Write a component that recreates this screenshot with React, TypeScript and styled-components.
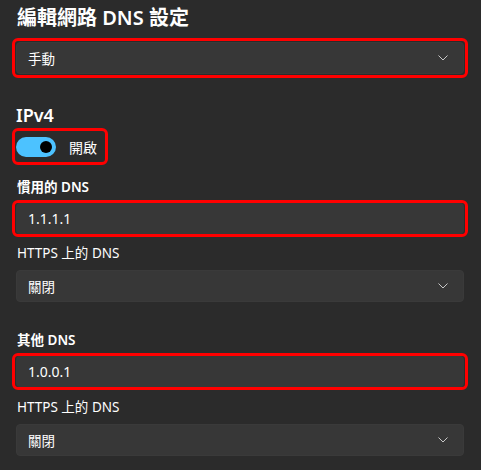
import React from "react";
import styled, { createGlobalStyle } from "styled-components";

const Global = createGlobalStyle`
  html, body { margin: 0; padding: 0; background: #2b2b2b; }
  body {
    font-family: "Noto Sans", "Noto Sans CJK TC", sans-serif;
    color: #ffffff;
  }
`;

const Page = styled.div`
  width: 481px;
  height: 470px;
  box-sizing: border-box;
  padding: 4px 17px 0 16px;
  display: flex;
  flex-direction: column;
  align-items: stretch;
  overflow: hidden;
`;

const Title = styled.h1`
  margin: 0;
  font-size: 20px;
  line-height: 28px;
  font-weight: 600;
  padding-left: 1px;
`;

const Heading = styled.h2`
  margin: 25px 0 0;
  font-size: 18px;
  line-height: 24px;
  font-weight: 600;
`;

const Label = styled.div<{ $bold?: boolean; $mt: number }>`
  margin-top: ${(p) => p.$mt}px;
  font-size: 13.5px;
  line-height: 20px;
  font-weight: ${(p) => (p.$bold ? 600 : 400)};
  padding-left: 1px;
`;

const Highlight = styled.div<{ $mt: number; $pad: number; $inline?: boolean }>`
  margin-top: ${(p) => p.$mt}px;
  margin-left: -4px;
  margin-right: -4px;
  border: 3px solid #ff0000;
  border-radius: 6px;
  padding: ${(p) => p.$pad}px 1px;
  display: ${(p) => (p.$inline ? "inline-flex" : "block")};
  align-self: ${(p) => (p.$inline ? "flex-start" : "stretch")};
`;

const Select = styled.div<{ $mt?: number }>`
  margin-top: ${(p) => p.$mt ?? 0}px;
  height: 32px;
  box-sizing: border-box;
  background: #373737;
  border: 1px solid #3a3a3a;
  border-radius: 4px;
  display: flex;
  align-items: center;
  justify-content: space-between;
  padding: 0 15px 0 11px;
  font-size: 13.5px;
`;

const TextField = styled.div`
  height: 31px;
  box-sizing: border-box;
  background: #373737;
  border-radius: 4px;
  display: flex;
  align-items: center;
  padding: 0 12px;
  font-size: 14px;
`;

const ToggleRow = styled.div`
  display: flex;
  align-items: center;
  gap: 13px;
  height: 31px;
  padding: 0 7px 0 0;
`;

const Track = styled.div<{ $on: boolean }>`
  width: 40px;
  height: 20px;
  border-radius: 10px;
  background: ${(p) => (p.$on ? "#4cc2ff" : "transparent")};
  position: relative;
  flex: none;
`;

const Knob = styled.div<{ $on: boolean }>`
  position: absolute;
  top: 4px;
  left: ${(p) => (p.$on ? "24px" : "4px")};
  width: 12px;
  height: 12px;
  border-radius: 50%;
  background: #000;
`;

const ToggleText = styled.span`
  font-size: 14px;
`;

const Chevron = () => (
  <svg width="10" height="6" viewBox="0 0 10 6" aria-hidden>
    <polyline points="0.5,0.5 5,5 9.5,0.5" fill="none" stroke="#c8c8c8" strokeWidth="1" />
  </svg>
);

export default function App() {
  return (
    <>
      <Global />
      <Page>
        <Title>編輯網路 DNS 設定</Title>
        <Highlight $mt={6} $pad={1}>
          <Select>
            <span>手動</span>
            <Chevron />
          </Select>
        </Highlight>

        <Heading>IPv4</Heading>
        <Highlight $mt={1} $pad={0} $inline>
          <ToggleRow>
            <Track $on>
              <Knob $on />
            </Track>
            <ToggleText>開啟</ToggleText>
          </ToggleRow>
        </Highlight>

        <Label $bold $mt={12}>慣用的 DNS</Label>
        <Highlight $mt={3} $pad={0}>
          <TextField>1.1.1.1</TextField>
        </Highlight>
        <Label $mt={6}>HTTPS 上的 DNS</Label>
        <Select $mt={7}>
          <span>關閉</span>
          <Chevron />
        </Select>

        <Label $bold $mt={28}>其他 DNS</Label>
        <Highlight $mt={3} $pad={0}>
          <TextField>1.0.0.1</TextField>
        </Highlight>
        <Label $mt={7}>HTTPS 上的 DNS</Label>
        <Select $mt={7}>
          <span>關閉</span>
          <Chevron />
        </Select>
      </Page>
    </>
  );
}
